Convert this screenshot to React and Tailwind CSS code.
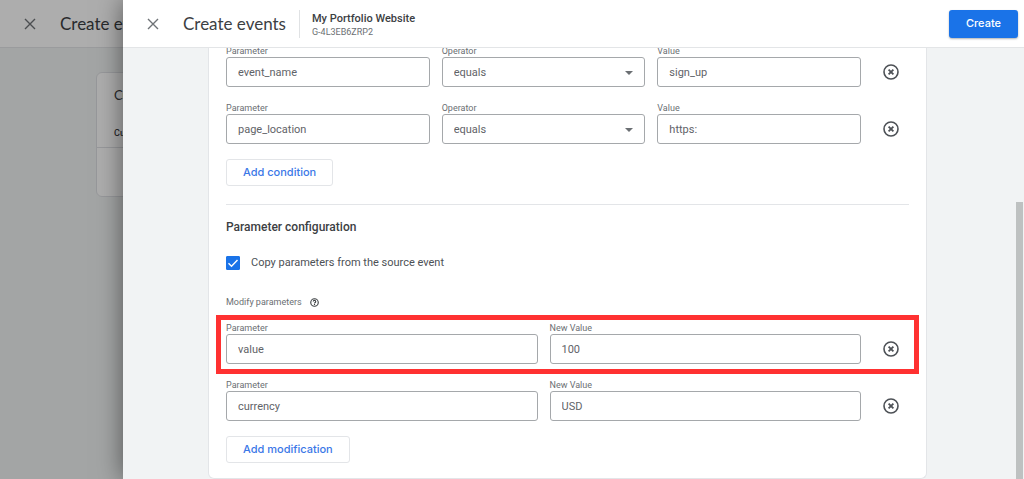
import { useId, useState } from "react";

const conditions = [
  { parameter: "event_name", value: "sign_up" },
  { parameter: "page_location", value: "https:" },
];

const modifications = [
  { parameter: "value", value: "100", highlighted: true },
  { parameter: "currency", value: "USD" },
];

function PageHeader({ children }) {
  return (
    <header className="flex h-12 shrink-0 items-center border-b border-[#e3e5e7] bg-white pl-5 pr-1.5">
      <button type="button" aria-label="Close" className="flex size-5 items-center justify-center text-[#6f7377]">
        <svg viewBox="0 0 12 12" className="size-3" fill="none" stroke="currentColor" strokeWidth="1.4">
          <path d="M1 1l10 10M11 1L1 11" />
        </svg>
      </button>
      <h1 className="ml-5 whitespace-nowrap font-['Lato',sans-serif] text-[17px] leading-6 text-[#3c4043]">
        Create events
      </h1>
      {children}
    </header>
  );
}

function TextField({ label, value }) {
  const id = useId();

  return (
    <div className="min-w-0 flex-1">
      <label htmlFor={id} className="block pt-0.5 text-[9px] leading-3 text-[#6b6f73]">
        {label}
      </label>
      <input
        id={id}
        type="text"
        defaultValue={value}
        className="block h-[30px] w-full rounded-[3px] border border-[#a5a8ab] bg-white px-[11px] text-[11px] text-[#5f6368] outline-none"
      />
    </div>
  );
}

function OperatorField() {
  const id = useId();

  return (
    <div className="min-w-0 flex-1">
      <label htmlFor={id} className="block pt-0.5 text-[9px] leading-3 text-[#6b6f73]">
        Operator
      </label>
      <div className="relative">
        <select
          id={id}
          defaultValue="equals"
          className="block h-[30px] w-full appearance-none rounded-[3px] border border-[#a5a8ab] bg-white px-[11px] pt-0.5 text-[11px] text-[#5f6368] outline-none"
        >
          <option value="equals">equals</option>
          <option value="contains">contains</option>
        </select>
        <svg viewBox="0 0 8 4" className="pointer-events-none absolute right-3 top-3.5 h-1 w-2 fill-[#6b6f73]">
          <path d="M0 0h8L4 4z" />
        </svg>
      </div>
    </div>
  );
}

function RemoveButton() {
  return (
    <button type="button" aria-label="Remove" className="flex h-[30px] w-9 items-center justify-center text-[#4d5156]">
      <svg viewBox="0 0 16 16" className="size-4" fill="none" stroke="currentColor">
        <circle cx="8" cy="8" r="7" strokeWidth="1.6" />
        <path d="M5.6 5.6l4.8 4.8M10.4 5.6l-4.8 4.8" strokeWidth="1.8" />
      </svg>
    </button>
  );
}

function AddButton({ children }) {
  return (
    <button
      type="button"
      className="mt-[15px] flex h-[27px] items-center rounded-[3px] border border-[#e3e5e8] bg-white px-4 font-['Inter',sans-serif] text-[11px] font-medium text-[#3b78e7]"
    >
      {children}
    </button>
  );
}

function EventsPage() {
  return (
    <div className="flex h-full flex-col bg-[#f1f3f4]">
      <PageHeader />
      <main className="pl-24 pt-6">
        <section className="h-[125px] rounded-md border border-[#dfe1e5] bg-white text-[#3c4043]">
          <h2 className="pl-[17px] pt-3 font-['Lato',sans-serif] text-[13px] leading-5">Custom events</h2>
          <p className="mt-5 border-b border-[#dfe1e5] pb-1.5 pl-[17px] text-[9px] font-medium leading-4">
            Custom event name
          </p>
        </section>
      </main>
    </div>
  );
}

function EventForm() {
  const [copyParameters, setCopyParameters] = useState(true);

  return (
    <form className="-mt-[5px] rounded-b-md border border-t-0 border-[#e3e5e8] bg-white px-[17px] pb-[15px]">
      <div className="flex flex-col gap-[13px]">
        {conditions.map((condition) => (
          <div key={condition.parameter} className="flex items-end gap-3">
            <TextField label="Parameter" value={condition.parameter} />
            <OperatorField />
            <TextField label="Value" value={condition.value} />
            <RemoveButton />
          </div>
        ))}
      </div>
      <AddButton>Add condition</AddButton>

      <hr className="mt-[18px] border-[#e3e5e8]" />

      <h2 className="mt-3 text-[12px] font-medium leading-5 text-[#3c4043]">Parameter configuration</h2>
      <label className="mt-4 flex items-center gap-[11px] text-[11px] leading-5 text-[#4d5156]">
        <span className="grid size-3.5 place-items-center">
          <input
            type="checkbox"
            checked={copyParameters}
            onChange={(e) => setCopyParameters(e.target.checked)}
            className="col-start-1 row-start-1 size-3.5 appearance-none rounded-[1px] border border-[#5f6368] checked:border-[#1a73e8] checked:bg-[#1a73e8]"
          />
          {copyParameters && (
            <svg viewBox="0 0 14 14" className="pointer-events-none col-start-1 row-start-1 size-3.5" fill="none" stroke="white" strokeWidth="1.4">
              <path d="M2.5 7.3l3 3 6-6.3" />
            </svg>
          )}
        </span>
        Copy parameters from the source event
      </label>

      <div className="mt-5 flex items-center gap-2 text-[9px] leading-[18px] text-[#6b6f73]">
        Modify parameters
        <svg viewBox="0 0 24 24" className="size-[9px] text-[#3c4043]" fill="none" stroke="currentColor" strokeWidth="3">
          <circle cx="12" cy="12" r="10" />
          <path d="M8.8 9.5a3.2 3.2 0 1 1 5.2 2.4c-1.2.9-2 1.4-2 2.6M12 16.2v2.4" />
        </svg>
      </div>

      <div className="mt-[9px] flex flex-col gap-[13px]">
        {modifications.map((modification) => (
          <div key={modification.parameter} className="relative flex items-end gap-3">
            <TextField label="Parameter" value={modification.parameter} />
            <TextField label="New Value" value={modification.value} />
            <RemoveButton />
            {modification.highlighted && (
              <div className="pointer-events-none absolute -inset-x-2.5 -bottom-2.5 -top-[5px] border-5 border-[#ff3131]" />
            )}
          </div>
        ))}
      </div>
      <AddButton>Add modification</AddButton>
    </form>
  );
}

function CreateEventDrawer() {
  return (
    <div className="absolute inset-y-0 left-[123px] right-0 flex flex-col bg-[#f1f3f4] shadow-[0_0_24px_rgba(0,0,0,0.5)]">
      <PageHeader>
        <div className="ml-[13px] border-l border-[#e0e2e4] pl-3 pt-0.5">
          <p className="text-[11px] font-medium leading-[14px] text-[#3c4043]">My Portfolio Website</p>
          <p className="text-[9px] leading-3 text-[#6b6f73]">G-4L3EB6ZRP2</p>
        </div>
        <button
          type="button"
          className="ml-auto h-7 rounded-[3px] bg-[#1a73e8] px-[17px] font-['Inter',sans-serif] text-[11px] font-medium text-white shadow-[0_1px_2px_rgba(60,64,67,0.4)]"
        >
          Create
        </button>
      </PageHeader>
      <div className="flex min-h-0 flex-1 overflow-hidden">
        <div className="min-w-0 flex-1 px-[85px]">
          <EventForm />
        </div>
        <div className="flex w-3 justify-end pr-px">
          <div className="mt-[154px] w-[7px] bg-[#bec1c1]" />
        </div>
      </div>
    </div>
  );
}

export default function App() {
  return (
    <div className="relative h-screen overflow-hidden font-['Roboto',sans-serif]">
      <EventsPage />
      <div className="absolute inset-0 bg-black/32" />
      <CreateEventDrawer />
    </div>
  );
}
